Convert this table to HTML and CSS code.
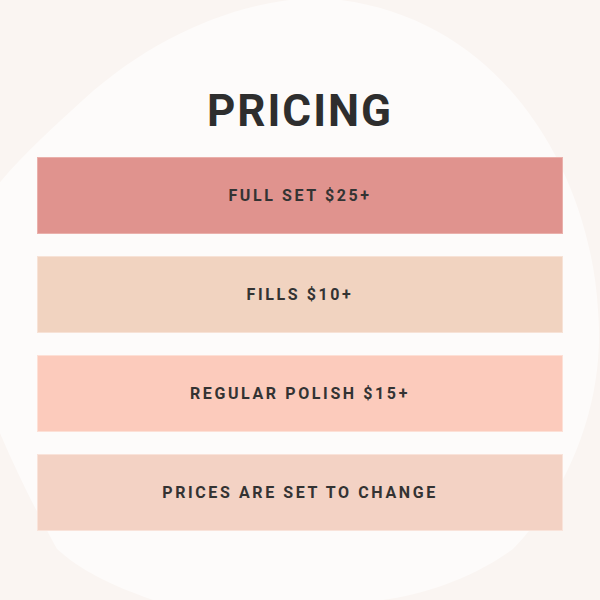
FILE: index.html
```html
<!DOCTYPE html>
<html>
<head>
<meta charset="utf-8">
<link rel="stylesheet" href="styles.css">
</head>
<body>
<div class="page">
  <svg class="blob" width="600" height="600" viewBox="0 0 600 600" aria-hidden="true">
    <path d="M321 -2 C500 10 590 170 598 310 C606 400 570 490 513 549 C470 580 420 595 383 600 C330 610 200 615 153 600 C110 585 80 570 57 549 C30 500 -60 330 -40 250 C-20 190 40 140 83 100 C160 30 250 -2 321 -2 Z" fill="#fdfbfa"/>
  </svg>
  <main class="content">
    <h1 class="title">PRICING</h1>
    <ul class="list">
      <li class="bar bar-1">FULL SET $25+</li>
      <li class="bar bar-2">FILLS $10+</li>
      <li class="bar bar-3">REGULAR POLISH $15+</li>
      <li class="bar bar-4">PRICES ARE SET TO CHANGE</li>
    </ul>
  </main>
</div>
</body>
</html>
```
FILE: styles.css
```css
html, body {
  margin: 0;
  padding: 0;
}
body {
  background: #faf5f2;
  font-family: Roboto, "Liberation Sans", Arial, sans-serif;
  color: #303030;
}
.page {
  position: relative;
  width: 600px;
  height: 600px;
  overflow: hidden;
}
.blob {
  position: absolute;
  left: 0;
  top: 0;
}
.content {
  position: relative;
  padding: 85px 37px 0;
}
.title {
  margin: 0 0 20px;
  font-size: 44px;
  line-height: 52px;
  font-weight: 700;
  letter-spacing: 2px;
  text-align: center;
  color: #2e2e2e;
}
.list {
  list-style: none;
  margin: 0;
  padding: 0;
  display: flex;
  flex-direction: column;
  gap: 22px;
}
.bar {
  box-sizing: border-box;
  height: 77px;
  display: flex;
  align-items: center;
  justify-content: center;
  font-size: 16px;
  font-weight: 700;
  letter-spacing: 2.6px;
  color: #333;
  border: 1px solid;
}
.bar-1 { background: #e0938e; border-color: #eab0ab; }
.bar-2 { background: #f1d3c0; border-color: #f7e2d6; }
.bar-3 { background: #fccbbc; border-color: #fde0d6; }
.bar-4 { background: #f3d2c4; border-color: #f9e3da; }
```
